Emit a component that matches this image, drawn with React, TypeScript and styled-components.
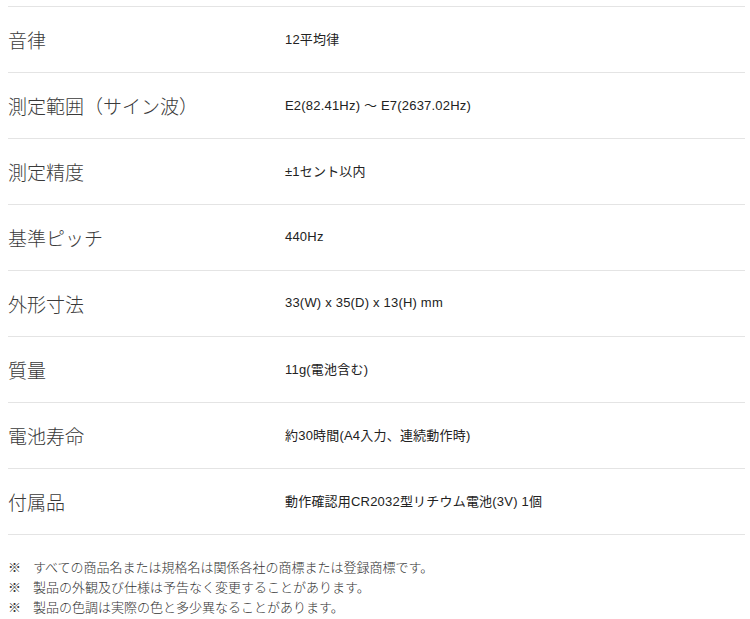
import React from "react";
import styled, { createGlobalStyle } from "styled-components";

const Global = createGlobalStyle`
  html, body { margin: 0; padding: 0; background: #fff; }
  body { padding: 6px 5px 0 8px; }
`;

const Table = styled.div`
  display: grid;
  grid-template-columns: 277px 1fr;
  border-top: 1px solid #e4e4e4;
  color: #333;
`;

const Cell = styled.div<{ $label?: boolean }>`
  height: 66px;
  display: flex;
  align-items: center;
  border-bottom: 1px solid #e4e4e4;
  font-family: ${(p) => (p.$label ? '"Noto Sans CJK JP", sans-serif' : '"Liberation Sans", "Noto Sans CJK JP", sans-serif')};
  font-size: ${(p) => (p.$label ? "19px" : "13px")};
  font-weight: ${(p) => (p.$label ? 300 : 400)};
  letter-spacing: ${(p) => (p.$label ? "0" : "0.2px")};
  color: ${(p) => (p.$label ? "#3a3a3a" : "#222")};
  padding-bottom: ${(p) => (p.$label ? "1px" : "2px")};
  box-sizing: border-box;
`;

const Notes = styled.ul`
  list-style: none;
  margin: 22px 0 0;
  padding: 0;
  font-family: "Noto Sans CJK JP", sans-serif;
  font-size: 13px;
  font-weight: 300;
  line-height: 20px;
  color: #333;
`;

const Note = styled.li`
  display: flex;
`;

const Mark = styled.span`
  width: 25px;
  flex: none;
`;

const rows: [string, string][] = [
  ["音律", "12平均律"],
  ["測定範囲（サイン波）", "E2(82.41Hz) ～ E7(2637.02Hz)"],
  ["測定精度", "±1セント以内"],
  ["基準ピッチ", "440Hz"],
  ["外形寸法", "33(W) x 35(D) x 13(H) mm"],
  ["質量", "11g(電池含む)"],
  ["電池寿命", "約30時間(A4入力、連続動作時)"],
  ["付属品", "動作確認用CR2032型リチウム電池(3V) 1個"],
];

const notes = [
  "すべての商品名または規格名は関係各社の商標または登録商標です。",
  "製品の外観及び仕様は予告なく変更することがあります。",
  "製品の色調は実際の色と多少異なることがあります。",
];

export default function App() {
  return (
    <>
      <Global />
      <Table>
        {rows.map(([k, v]) => (
          <React.Fragment key={k}>
            <Cell $label>{k}</Cell>
            <Cell>{v}</Cell>
          </React.Fragment>
        ))}
      </Table>
      <Notes>
        {notes.map((n) => (
          <Note key={n}>
            <Mark>※</Mark>
            <span>{n}</span>
          </Note>
        ))}
      </Notes>
    </>
  );
}
